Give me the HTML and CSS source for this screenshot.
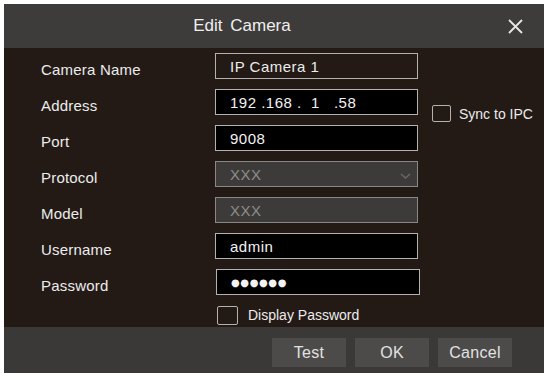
FILE: index.html
```html
<!DOCTYPE html>
<html>
<head>
    <title>Edit Camera</title>
    <link rel="stylesheet" href="styles.css">
</head>
<body>
    <div class="dialog">
        <div class="dialog-header">
            <span class="dialog-title">Edit Camera</span>
            <span class="close-btn">
                <svg width="15" height="15" viewBox="0 0 15 15"><path d="M1 1 L14 14 M14 1 L1 14" stroke="#e6e6e6" stroke-width="1.8" fill="none"/></svg>
            </span>
        </div>

        <!-- Form fields -->
        <div class="dialog-body">
            <label class="field-label">Camera Name</label>
            <div class="field field-plain">IP Camera 1</div>

            <label class="field-label">Address</label>
            <div class="field field-dark address">192 .168 .  1   .58</div>
            <div class="sync">
                <span class="check-box"></span>
                <span>Sync to IPC</span>
            </div>

            <label class="field-label">Port</label>
            <div class="field field-dark">9008</div>

            <label class="field-label">Protocol</label>
            <div class="field field-disabled">
                XXX
                <svg class="chevron" width="11" height="6" viewBox="0 0 11 6"><path d="M1 1 L5.5 5 L10 1" stroke="#6a6866" stroke-width="1.4" fill="none"/></svg>
            </div>

            <label class="field-label">Model</label>
            <div class="field field-disabled">XXX</div>

            <label class="field-label">Username</label>
            <div class="field field-dark">admin</div>

            <label class="field-label">Password</label>
            <div class="field field-dark password"><span class="dots">●●●●●●</span></div>

            <div class="display-pass">
                <span class="check-box big"></span>
                <span>Display Password</span>
            </div>
        </div>

        <div class="dialog-footer">
            <button class="footer-btn">Test</button>
            <button class="footer-btn">OK</button>
            <button class="footer-btn">Cancel</button>
        </div>
    </div>
</body>
</html>
```

FILE: styles.css
```css
body {
    margin: 0;
    background: #fff;
    font-family: "Liberation Sans", Arial, sans-serif;
}

.dialog {
    margin: 4px 0 0 4px;
    width: 540px;
    height: 369px;
    display: flex;
    flex-direction: column;
    background: #231a16;
    color: #ebebeb;
}

.dialog-header {
    height: 44px;
    flex-shrink: 0;
    background: #3e3c3a;
    display: flex;
    align-items: center;
    justify-content: center;
    padding-right: 64px;
    position: relative;
}
.dialog-title {
    font-size: 17px;
    word-spacing: 3px;
    color: #efefef;
}
.close-btn {
    position: absolute;
    right: 21px;
    top: 15px;
    line-height: 0;
}

.dialog-body {
    flex: 1;
    min-height: 0;
    display: grid;
    grid-template-columns: 174px 203px 1fr;
    grid-template-rows: repeat(7, 26px) 20px;
    row-gap: 10px;
    padding: 5px 0 0 37px;
    font-size: 15px;
}

.field-label {
    grid-column: 1;
    display: flex;
    align-items: center;
    padding-top: 6px;
    letter-spacing: 0.2px;
    color: #ececec;
}

.field {
    grid-column: 2;
    box-sizing: border-box;
    border: 1px solid #b4b2b0;
    padding: 1px 0 0 14px;
    display: flex;
    align-items: center;
    letter-spacing: 0.5px;
    position: relative;
}
.field-plain { background: transparent; }
.field-dark { background: #000; color: #f2f2f2; }
.field-disabled {
    background: #3d3b39;
    color: #8e8c8a;
    border-color: #8a8886;
}
.address { white-space: pre; }
.password {
    margin-left: 1px;
    width: 204px;
}
.dots {
    font-family: "DejaVu Sans", sans-serif;
    font-size: 10px;
    letter-spacing: 0.6px;
}
.chevron {
    position: absolute;
    right: 6px;
    top: 11px;
}

.sync {
    grid-column: 3;
    grid-row: 2 / span 2;
    display: flex;
    align-items: center;
    align-self: start;
    gap: 8px;
    padding: 16px 0 0 14px;
    font-size: 14px;
}

.check-box {
    display: inline-block;
    width: 17px;
    height: 15px;
    border: 1px solid #b4b2b0;
    border-radius: 2px;
}
.check-box.big {
    width: 19px;
    height: 17px;
}

.display-pass {
    grid-column: 2 / span 2;
    display: flex;
    align-items: center;
    gap: 10px;
    margin-left: 2px;
    font-size: 14px;
}

.dialog-footer {
    height: 46px;
    flex-shrink: 0;
    background: #3a3938;
    display: flex;
    justify-content: flex-end;
    align-items: flex-start;
    gap: 9px;
    padding: 11px 32px 0 0;
    box-sizing: border-box;
}
.footer-btn {
    width: 74px;
    height: 29px;
    border: none;
    background: #4c4b4a;
    color: #e2e2e2;
    font-family: "Liberation Sans", Arial, sans-serif;
    font-size: 16px;
    letter-spacing: 0.3px;
    padding: 1px 0 0;
}
```
